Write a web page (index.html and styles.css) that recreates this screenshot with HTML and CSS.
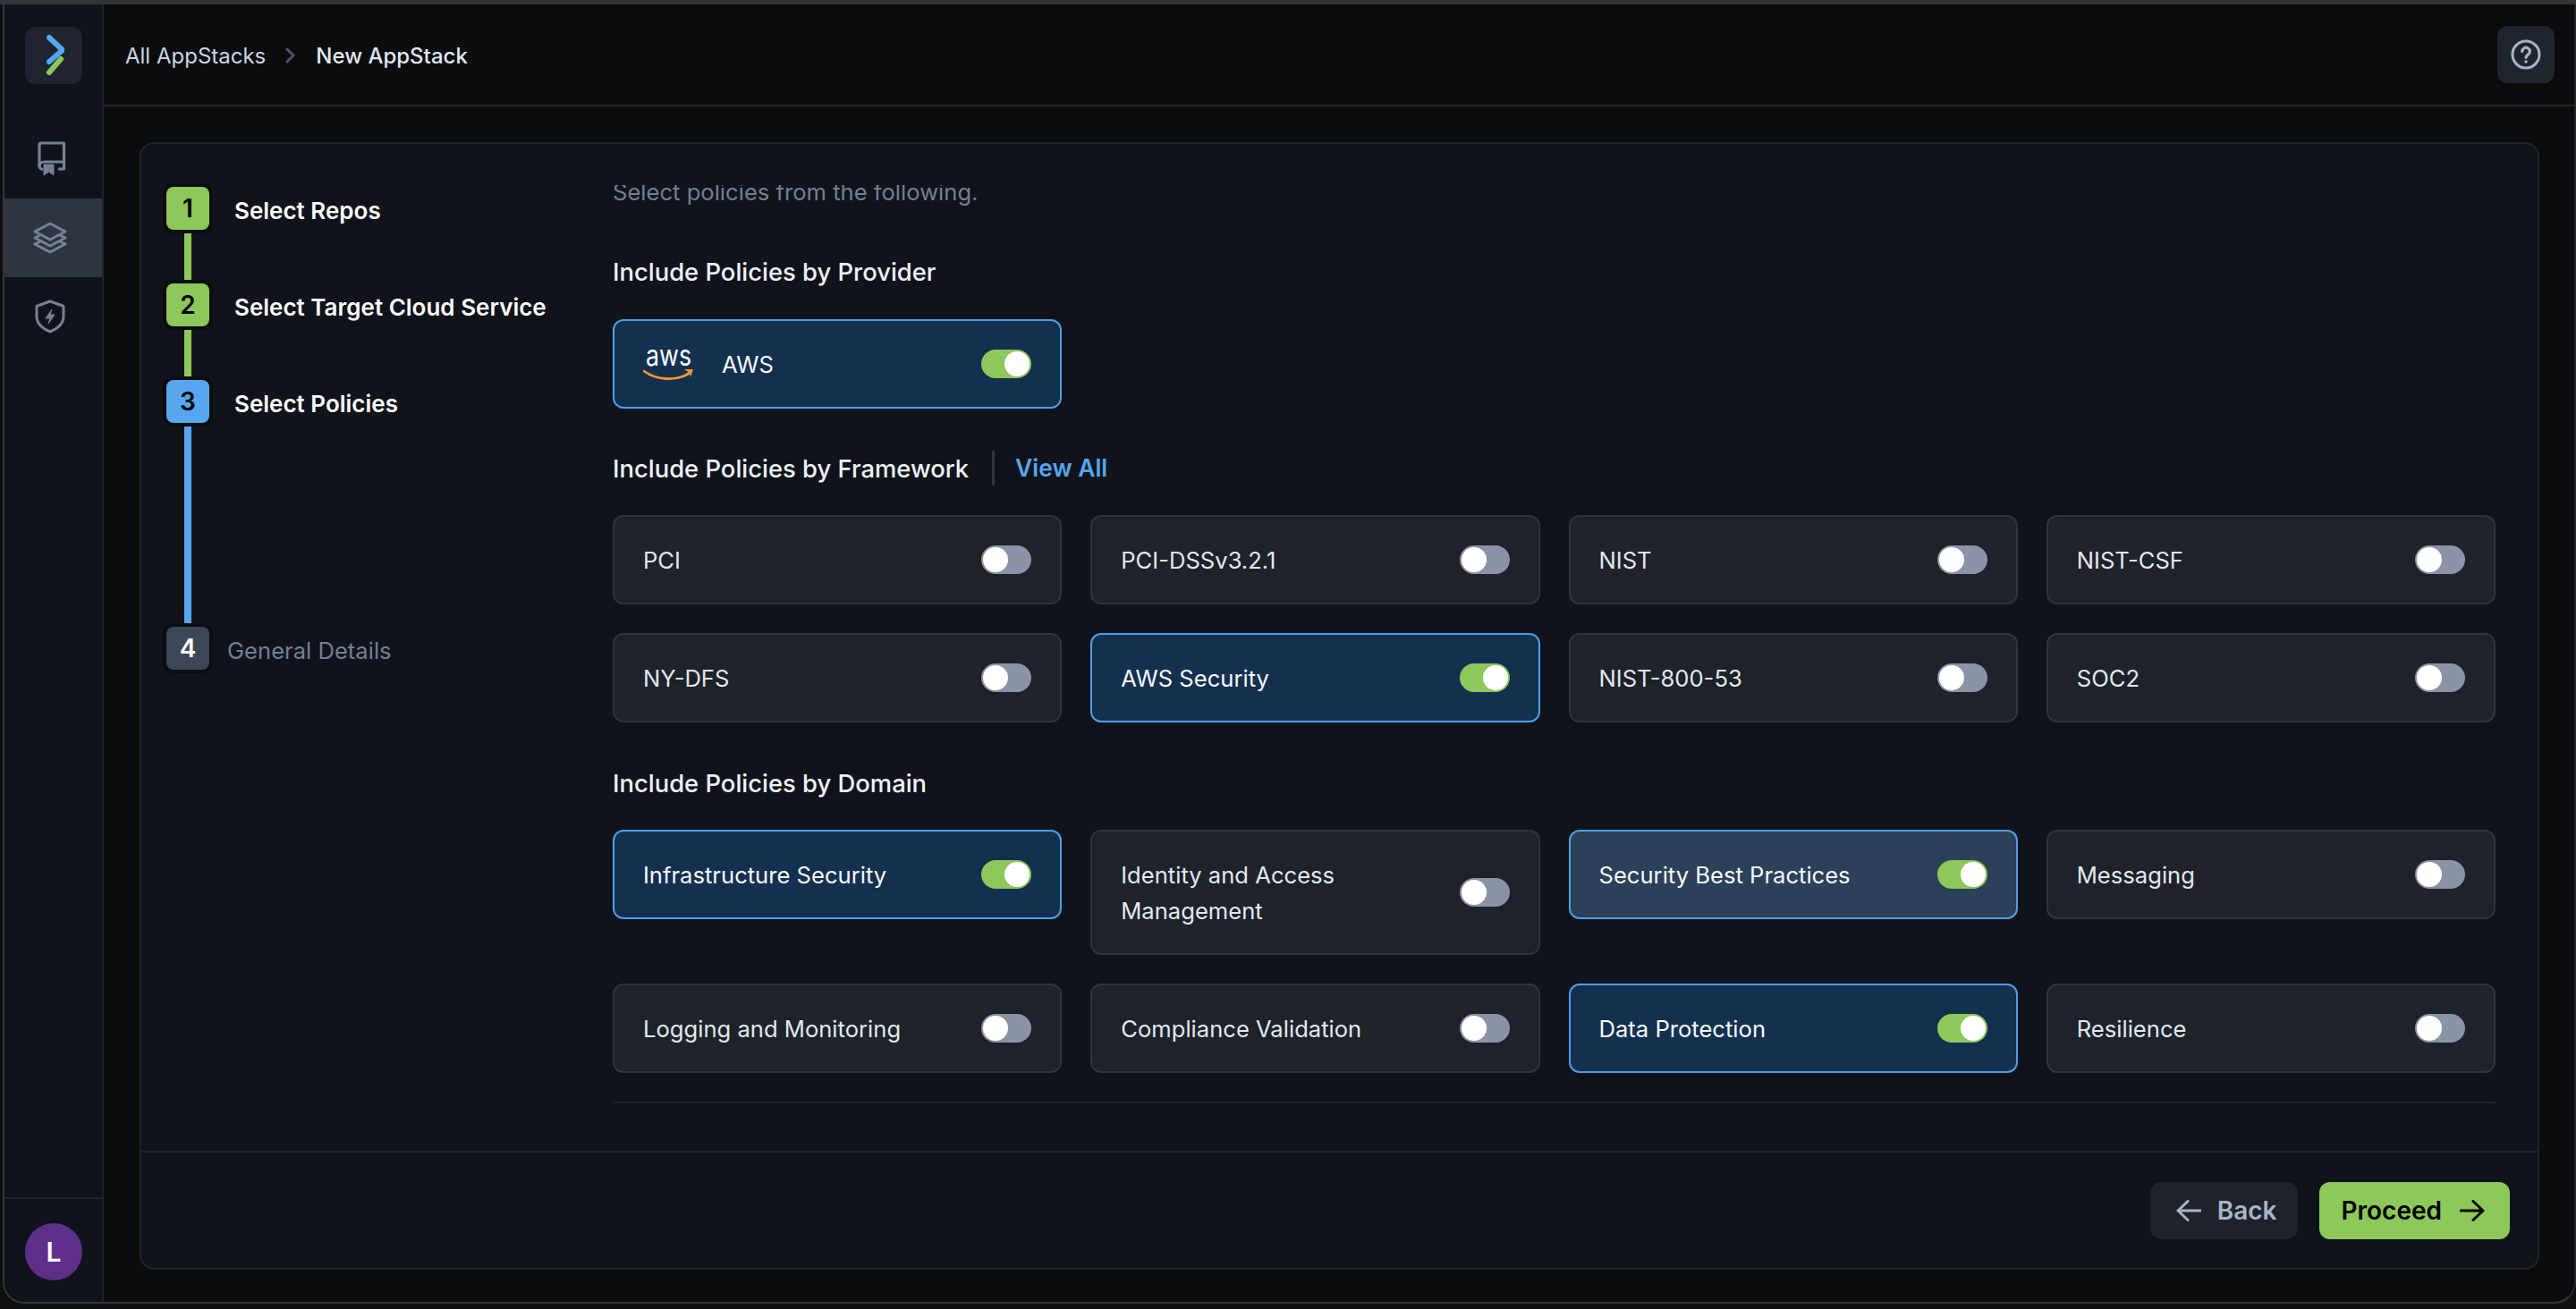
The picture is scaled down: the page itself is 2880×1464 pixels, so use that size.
FILE: index.html
```html
<!DOCTYPE html>
<html lang="en">
  <head>
    <meta charset="UTF-8" />
    <meta name="viewport" content="width=device-width, initial-scale=1.0" />
    <title>New AppStack</title>
    <link rel="stylesheet" href="styles.css">
  </head>
  <body>
    <div class="window">
      <div class="sidebar">
        <div class="logo">
          <svg width="24" height="48" viewBox="0 0 24 48" fill="none" stroke-linecap="round" stroke-linejoin="round">
            <path d="M7 4 L22 18 L7 31" stroke="#56a5ee" stroke-width="6" />
            <path d="M20 28 L7 43" stroke="#8cc85a" stroke-width="6" />
          </svg>
        </div>
        <div class="nav-item book">
          <svg width="32" height="40" viewBox="0 0 32 40" fill="none" stroke="#758196" stroke-width="3.200" stroke-linejoin="round">
            <path d="M2 28 V4 a2 2 0 0 1 2 -2 H29.500 V31 H23" />
            <path d="M8 23 H29.500" />
            <path d="M8 23 C4 23 2 25 2 27.500 C2 30 4 31.500 6 31.500" />
            <path d="M7 26 H18 V38 L12.500 34 L7 38 Z" fill="#758196" stroke-width="1" />
          </svg>
        </div>
        <div class="nav-item active">
          <svg width="38" height="36" viewBox="0 0 38 36" fill="none" stroke="#758196" stroke-width="3" stroke-linejoin="round">
            <path d="M19 2 L36 11 L19 20 L2 11 Z" />
            <path d="M8 15 L2 18 L19 27 L36 18 L30 15" />
            <path d="M8 22 L2 25 L19 34 L36 25 L30 22" />
          </svg>
        </div>
        <div class="nav-item">
          <svg width="34" height="38" viewBox="0 0 34 38" fill="none" stroke="#758196" stroke-width="3" stroke-linejoin="round">
            <path d="M17 2 L31 7 a1 1 0 0 1 1 1 V19 C32 27 25 33 17 36 C9 33 2 27 2 19 V8 a1 1 0 0 1 1 -1 Z" />
            <path d="M19 11 L12 21 H17 L15 27 L22 17 H17 Z" fill="#758196" stroke-width="1" />
          </svg>
        </div>
        <div class="sidebar-foot">
          <div class="avatar">L</div>
        </div>
      </div>

      <div class="main">
        <div class="topbar">
          <div class="crumbs">
            <span class="crumb">All AppStacks</span>
            <svg width="12" height="18" viewBox="0 0 12 18" fill="none" stroke="#4a5568" stroke-width="3" stroke-linecap="round" stroke-linejoin="round">
              <path d="M2 2 L9 9 L2 16" />
            </svg>
            <span class="crumb current">New AppStack</span>
          </div>
          <div class="help">
            <svg width="36" height="36" viewBox="0 0 36 36" fill="none" stroke="#a9b4c6" stroke-width="3">
              <circle cx="18" cy="18" r="15" />
              <path d="M13.800 14.500 a4.300 4.300 0 1 1 6.600 3.700 c-1.500 1 -2.400 1.600 -2.400 3.300" stroke-width="3.200" stroke-linecap="round" />
              <circle cx="18" cy="26" r="1.700" fill="#a9b4c6" stroke="none" />
            </svg>
          </div>
        </div>

        <div class="panel">
          <div class="panel-body">
            <div class="steps">
              <div class="step done">
                <div class="step-head"><div class="step-num">1</div><div class="step-label">Select Repos</div></div>
                <div class="step-line short"></div>
              </div>
              <div class="step done">
                <div class="step-head"><div class="step-num">2</div><div class="step-label">Select Target Cloud Service</div></div>
                <div class="step-line short"></div>
              </div>
              <div class="step current">
                <div class="step-head"><div class="step-num">3</div><div class="step-label">Select Policies</div></div>
                <div class="step-line tall"></div>
              </div>
              <div class="step todo">
                <div class="step-head"><div class="step-num">4</div><div class="step-label">General Details</div></div>
              </div>
            </div>

            <div class="policies">
              <div class="policies-inner">
                <p class="intro">Select policies from the following.</p>

                <h3 class="group-title provider-title">Include Policies by Provider</h3>
                <div class="opt-grid">
                  <div class="opt on">
                    <div class="opt-name">
                      <svg class="aws" width="58" height="42" viewBox="0 0 58 42" fill="none">
                        <text x="3" y="22" textLength="51" lengthAdjust="spacingAndGlyphs" class="aws-word">aws</text>
                        <path d="M1 28 C14 38 38 40 52 30" stroke="#f0982e" stroke-width="2.800" stroke-linecap="round" />
                        <path d="M46 26 L56 26 L53 35 L52 30 Z" fill="#f0982e" />
                      </svg>
                      AWS
                    </div>
                    <div class="toggle"></div>
                  </div>
                </div>

                <div class="group-row">
                  <h3 class="group-title">Include Policies by Framework</h3>
                  <span class="view-all">View All</span>
                </div>
                <div class="opt-grid">
                  <div class="opt"><div class="opt-name">PCI</div><div class="toggle"></div></div>
                  <div class="opt"><div class="opt-name">PCI-DSSv3.2.1</div><div class="toggle"></div></div>
                  <div class="opt"><div class="opt-name">NIST</div><div class="toggle"></div></div>
                  <div class="opt"><div class="opt-name">NIST-CSF</div><div class="toggle"></div></div>
                  <div class="opt"><div class="opt-name">NY-DFS</div><div class="toggle"></div></div>
                  <div class="opt on"><div class="opt-name">AWS Security</div><div class="toggle"></div></div>
                  <div class="opt"><div class="opt-name">NIST-800-53</div><div class="toggle"></div></div>
                  <div class="opt"><div class="opt-name">SOC2</div><div class="toggle"></div></div>
                </div>

                <h3 class="group-title domain-title">Include Policies by Domain</h3>
                <div class="opt-grid">
                  <div class="opt on"><div class="opt-name">Infrastructure Security</div><div class="toggle"></div></div>
                  <div class="opt"><div class="opt-name">Identity and Access Management</div><div class="toggle"></div></div>
                  <div class="opt on hover"><div class="opt-name">Security Best Practices</div><div class="toggle"></div></div>
                  <div class="opt"><div class="opt-name">Messaging</div><div class="toggle"></div></div>
                  <div class="opt"><div class="opt-name">Logging and Monitoring</div><div class="toggle"></div></div>
                  <div class="opt"><div class="opt-name">Compliance Validation</div><div class="toggle"></div></div>
                  <div class="opt on"><div class="opt-name">Data Protection</div><div class="toggle"></div></div>
                  <div class="opt"><div class="opt-name">Resilience</div><div class="toggle"></div></div>
                </div>
                <div class="policies-rule"></div>
              </div>
            </div>
          </div>

          <div class="panel-foot">
            <button class="btn back">
              <svg width="28" height="24" viewBox="0 0 28 24" fill="none" stroke="#a9b4c6" stroke-width="3" stroke-linecap="round" stroke-linejoin="round">
                <path d="M27 12 H2 M13 1.500 L2 12 L13 22.500" />
              </svg>
              Back
            </button>
            <button class="btn proceed">
              Proceed
              <svg width="28" height="24" viewBox="0 0 28 24" fill="none" stroke="#000" stroke-width="3" stroke-linecap="round" stroke-linejoin="round">
                <path d="M1 12 H26 M15 1.500 L26 12 L15 22.500" />
              </svg>
            </button>
          </div>
        </div>
      </div>
    </div>
  </body>
</html>
```

FILE: styles.css
```css
* {
  margin: 0;
  padding: 0;
  box-sizing: border-box;
  font-family: Inter, "Liberation Sans", sans-serif;
}

html,
body {
  height: 100%;
  overflow: hidden;
}

body {
  height: 1464px;
  padding: 0 0 6px 3px;
  background: #0d0f11;
  border-top: 5px solid #333436;
}

.window {
  display: flex;
  height: 100%;
  background: #0a0c0e;
  border-radius: 0 0 24px 24px;
  overflow: hidden;
  border-bottom: 2px solid #33363a;
  border-left: 2px solid #33363a;
  border-right: 2px solid #26282b;
}

/* sidebar */
.sidebar {
  width: 111px;
  flex-shrink: 0;
  display: flex;
  flex-direction: column;
  background: #10141a;
  border-right: 2px solid #1f242c;
}

.logo {
  width: 64px;
  height: 64px;
  margin: 25px 0 0 23px;
  background: #1f2430;
  border-radius: 12px;
  display: flex;
  align-items: center;
  justify-content: center;
}

.nav-item {
  height: 88px;
  display: flex;
  align-items: center;
  justify-content: center;
  padding-right: 8px;
}

.nav-item.book {
  padding-right: 4px;
}

.logo + .nav-item {
  margin-top: 40px;
}

.nav-item.active {
  background: #2d3540;
}

.sidebar-foot {
  margin-top: auto;
  height: 117px;
  border-top: 2px solid #1f242c;
  padding: 27px 0 0 23px;
}

.avatar {
  width: 64px;
  height: 64px;
  border-radius: 50%;
  background: #5d2f88;
  color: white;
  font-size: 30px;
  font-weight: 600;
  display: flex;
  align-items: center;
  justify-content: center;
}

/* top bar */
.main {
  flex: 1;
  min-width: 0;
  display: flex;
  flex-direction: column;
}

.topbar {
  height: 114px;
  flex-shrink: 0;
  display: flex;
  align-items: center;
  justify-content: space-between;
  padding: 0 22px 0 24px;
  border-bottom: 2px solid #1f242c;
}

.crumbs {
  display: flex;
  align-items: center;
  gap: 22px;
  padding-top: 2px;
}

.crumb {
  font-size: 24px;
  color: #cbd5e0;
}

.crumb.current {
  color: #e2e8f0;
  font-weight: 500;
}

.help {
  width: 64px;
  height: 64px;
  background: #1f252c;
  border-radius: 12px;
  display: flex;
  align-items: center;
  justify-content: center;
}

/* main panel */
.panel {
  margin: 40px 39px 36px 40px;
  flex: 1;
  min-height: 0;
  display: flex;
  flex-direction: column;
  background: #10141a;
  border: 2px solid #1f242c;
  border-radius: 16px;
}

.panel-body {
  flex: 1;
  min-height: 0;
  display: flex;
}

.steps {
  width: 527px;
  flex-shrink: 0;
  padding: 48px 0 0 28px;
}

.step-head {
  display: flex;
  align-items: center;
  height: 48px;
}

.step-num {
  width: 48px;
  height: 48px;
  border-radius: 8px;
  display: flex;
  align-items: center;
  justify-content: center;
  font-size: 28px;
  font-weight: 600;
  box-shadow: 0 0 0 4px #0b0d10;
  position: relative;
}

.step-label {
  margin-left: 28px;
  padding-top: 5px;
  font-size: 26px;
  font-weight: 600;
  color: white;
}

.step-line {
  width: 8px;
  margin-left: 20px;
}

.step-line.short {
  height: 60px;
}

.step-line.tall {
  height: 228px;
}

.step.done .step-num {
  background: #8cc85a;
  color: #000;
}

.step.done .step-line {
  background: #8cc85a;
}

.step.current .step-num {
  background: #58a6f0;
  color: #000;
}

.step.current .step-line {
  background: #58a6f0;
}

.step.todo .step-num {
  background: #3c4656;
  color: white;
}

.step.todo .step-label {
  margin-left: 20px;
  font-size: 25.600px;
  font-weight: 400;
  color: #718096;
}

/* policy options */
.policies {
  flex: 1;
  min-width: 0;
  margin-right: 47px;
  margin-top: 46px;
  overflow: hidden;
}

.policies-inner {
  margin-top: -8px;
}

.intro {
  font-size: 25.600px;
  line-height: 32px;
  color: #718096;
}

.group-title {
  font-size: 27.400px;
  line-height: 36px;
  font-weight: 500;
  color: #edf2f7;
}

.provider-title {
  margin: 55px 0 35px;
}

.group-row {
  display: flex;
  align-items: center;
  margin: 47px 0 33px;
}

.view-all {
  margin-left: 26px;
  padding-left: 23px;
  border-left: 3px solid #2d3540;
  font-size: 26.400px;
  line-height: 39px;
  font-weight: 600;
  color: #58a6f0;
}

.domain-title {
  margin: 50px 0 34px;
}

.opt-grid {
  display: grid;
  grid-template-columns: repeat(4, 1fr);
  gap: 32px;
  align-items: start;
}

.opt {
  padding: 28px 32px;
  display: flex;
  align-items: center;
  justify-content: space-between;
  gap: 24px;
  background: #1e2229;
  border: 2px solid #2d3440;
  border-radius: 12px;
}

.opt.on {
  background: #14304f;
  border-color: #4e9fe8;
}

.opt.on.hover {
  background: #2b4059;
}

.opt-name {
  display: flex;
  align-items: center;
  margin: 1px 0 -1px;
  font-size: 25.600px;
  line-height: 40px;
  color: #e2e8f0;
}

.on .opt-name {
  color: #f7fafc;
}

.aws {
  margin: -1px 30px -1px 0;
}

.aws-word {
  font-size: 32px;
  font-weight: 400;
  fill: white;
}

.toggle {
  width: 56px;
  height: 32px;
  flex-shrink: 0;
  border-radius: 16px;
  background: #8a94a6;
  position: relative;
}

.toggle::after {
  content: "";
  position: absolute;
  top: 2px;
  left: 2px;
  width: 28px;
  height: 28px;
  border-radius: 50%;
  background: white;
}

.on .toggle {
  background: #8cc85a;
}

.on .toggle::after {
  left: 26px;
}

.policies-rule {
  margin-top: 32px;
  height: 2px;
  background: #1f242c;
}

/* footer */
.panel-foot {
  height: 131px;
  flex-shrink: 0;
  display: flex;
  justify-content: flex-end;
  align-items: center;
  gap: 24px;
  padding-right: 31px;
  border-top: 2px solid #1f242c;
}

.btn {
  height: 64px;
  display: flex;
  align-items: center;
  border: none;
  border-radius: 12px;
  font-size: 28px;
  font-weight: 600;
}

.btn.back {
  gap: 18px;
  padding: 0 24px 0 29px;
  background: #1e2229;
  color: #a9b4c6;
}

.btn.proceed {
  gap: 20px;
  padding: 0 28px 0 24px;
  background: #8cc85a;
  color: #000;
}
```
